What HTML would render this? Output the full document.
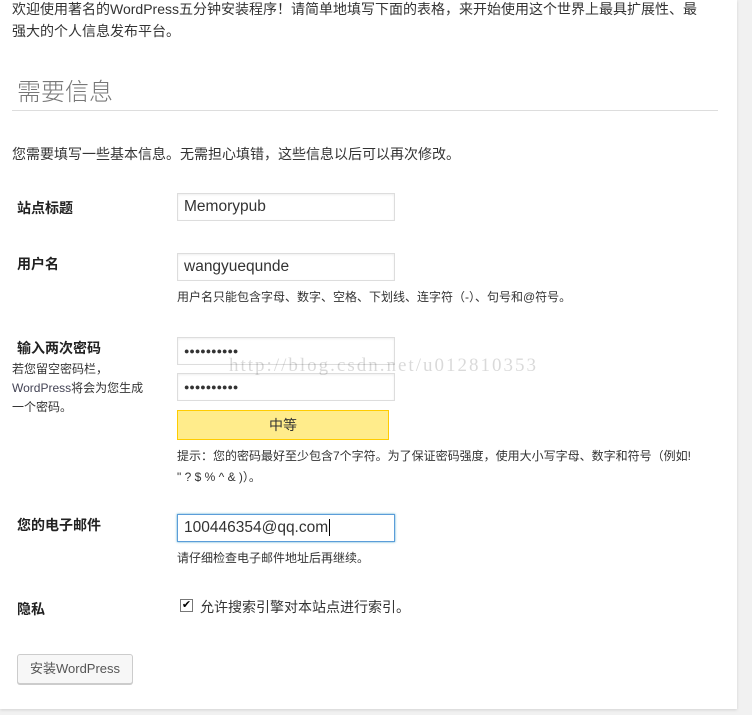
<!DOCTYPE html>
<html><head><meta charset="utf-8"><style>
body{margin:0;width:752px;height:715px;background:#f1f1f1;font-family:"Liberation Sans","Noto Sans CJK SC",sans-serif;color:#444;position:relative;overflow:hidden}
.panel{position:absolute;left:0;top:0;width:737px;height:709px;background:#fff;box-shadow:0 1px 3px rgba(0,0,0,.13)}
.a{position:absolute;white-space:nowrap}
.t{font-size:14px;color:#333}
.lab{font-size:14px;font-weight:bold;color:#222}
.in{position:absolute;left:177px;border:1px solid #ddd;box-shadow:inset 0 1px 2px rgba(0,0,0,.07);font-size:15.5px;color:#333;line-height:26px;padding-left:6px;box-sizing:border-box;width:218px;height:28px}
.s{font-size:12px;color:#333}
.dots{font-size:9px;letter-spacing:0;line-height:26px}
</style></head><body>
<div class="panel"></div>
<div class="a t" style="left:12px;top:-2px;line-height:22px;">欢迎使用著名的WordPress五分钟安装程序！请简单地填写下面的表格，来开始使用这个世界上最具扩展性、最<br>强大的个人信息发布平台。</div>
<div class="a" style="left:17px;top:72px;font-size:24px;color:#777;font-weight:300">需要信息</div>
<div class="a" style="left:12px;top:110px;width:706px;height:1px;background:#ddd"></div>
<div class="a t" style="left:12px;top:144px">您需要填写一些基本信息。无需担心填错，这些信息以后可以再次修改。</div>
<div class="a lab" style="left:17px;top:198px">站点标题</div>
<div class="in" style="top:193px">Memorypub</div>
<div class="a lab" style="left:17px;top:254px">用户名</div>
<div class="in" style="top:253px">wangyuequnde</div>
<div class="a s" style="left:177px;top:288px">用户名只能包含字母、数字、空格、下划线、连字符（-）、句号和@符号。</div>
<div class="a lab" style="left:17px;top:338px">输入两次密码</div>
<div class="a s" style="left:12px;top:360px;line-height:19px;color:#333">若您留空密码栏，<br><span style="color:#445">WordPress</span>将会为您生成<br>一个密码。</div>
<div class="in dots" style="top:337px">●●●●●●●●●●</div>
<div class="in dots" style="top:373px">●●●●●●●●●●</div>
<div class="a" style="left:229px;top:355px;font-family:'Liberation Serif',serif;font-size:19px;letter-spacing:2px;color:rgba(0,0,0,.15)">http://blog.csdn.net/u012810353</div>
<div class="a" style="left:177px;top:410px;width:212px;height:30px;box-sizing:border-box;background:#ffec8b;border:1px solid #fc0;text-align:center;line-height:28px;font-size:14px;color:#333">中等</div>
<div class="a s" style="left:177px;top:446px;line-height:21px">提示：您的密码最好至少包含7个字符。为了保证密码强度，使用大小写字母、数字和符号（例如!<br>" ? $ % ^ &amp; )）。</div>
<div class="a lab" style="left:17px;top:515px">您的电子邮件</div>
<div class="in" style="top:514px;border:1px solid #5b9dd9;box-shadow:0 0 2px rgba(30,140,190,.8)">100446354@qq.com<span style="border-left:1px solid #000;margin-left:1px"></span></div>
<div class="a s" style="left:177px;top:549px">请仔细检查电子邮件地址后再继续。</div>
<div class="a lab" style="left:17px;top:599px">隐私</div>
<div class="a" style="left:180px;top:599px;width:11px;height:11px;border:1px solid #777;font-size:11px;line-height:11px;text-align:center;color:#000">✔</div>
<div class="a t" style="left:200px;top:597px">允许搜索引擎对本站点进行索引。</div>
<div class="a" style="left:17px;top:654px;width:116px;height:30px;box-sizing:border-box;border:1px solid #ccc;background:#f7f7f7;border-radius:3px;box-shadow:0 1px 0 #ccc;font-size:13px;color:#555;text-align:center;line-height:28px">安装WordPress</div>
</body></html>
